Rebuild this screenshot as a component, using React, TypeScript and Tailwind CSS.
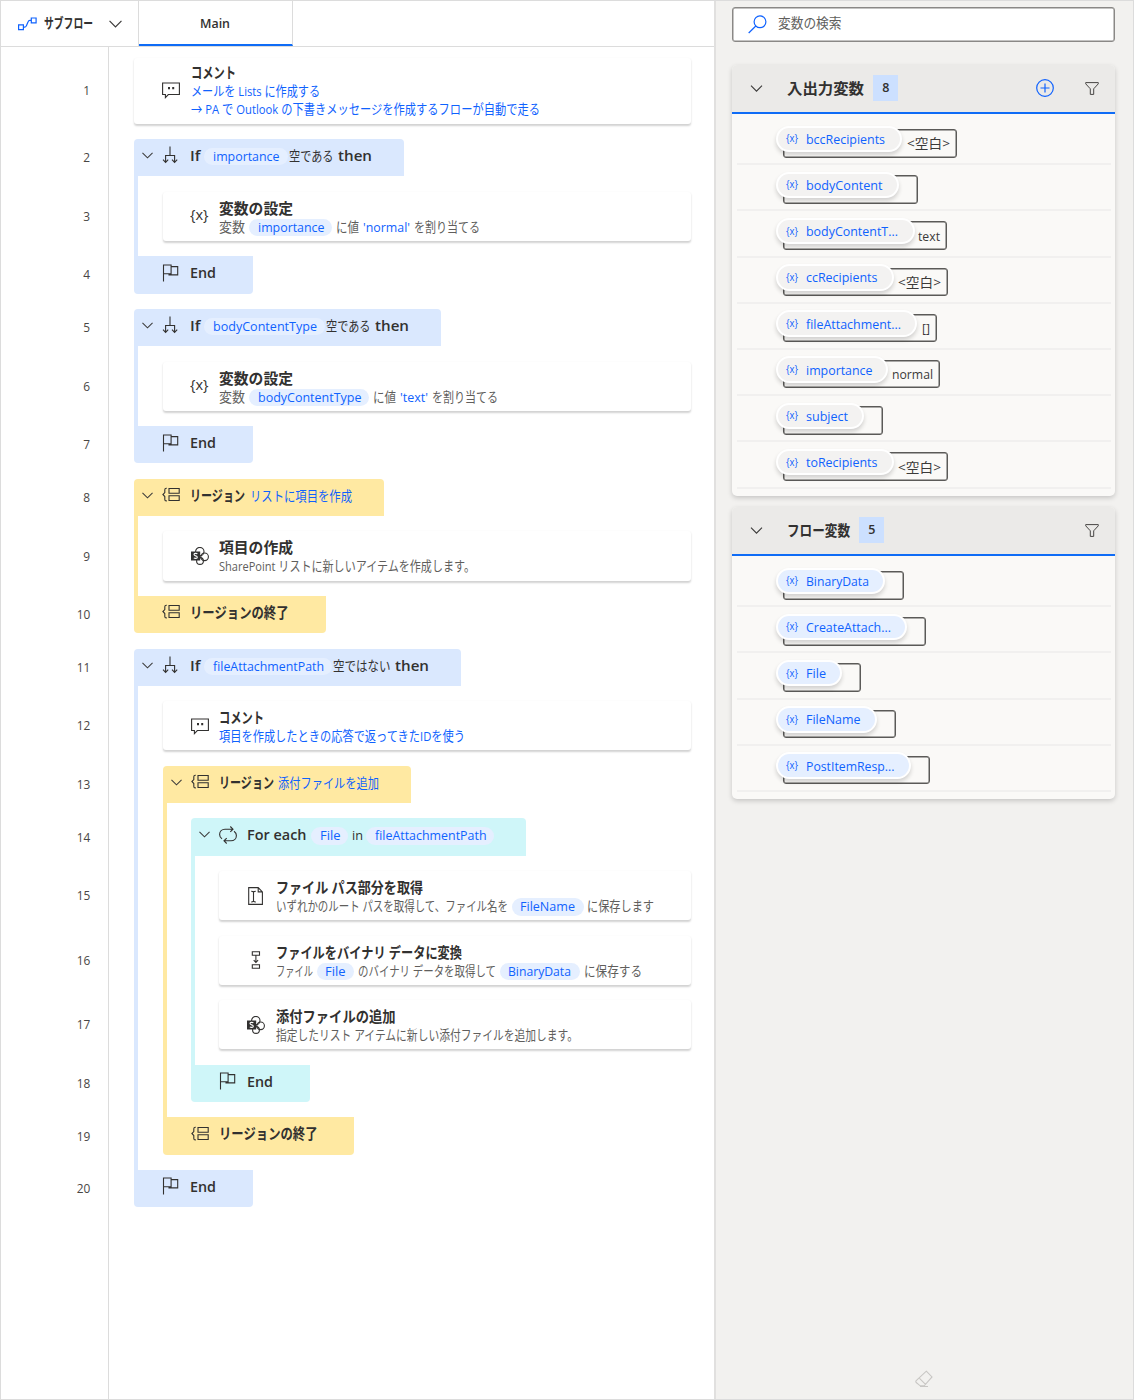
import { useLayoutEffect, useRef, useState } from 'react';
import type { ReactNode } from 'react';
import { clsx } from 'clsx';

type Tone = 'blue' | 'yellow' | 'cyan';

const toneBg: Record<Tone, string> = {
  blue: 'bg-[#dae8fe]',
  yellow: 'bg-[#ffe9a2]',
  cyan: 'bg-[#cff6f9]',
};

const toneBorder: Record<Tone, string> = {
  blue: 'border-[#dae8fe]',
  yellow: 'border-[#ffe9a2]',
  cyan: 'border-[#cff6f9]',
};

interface FitProps {
  w: number;
  children: string;
  className?: string;
}

// One run of text, condensed or widened so that it takes exactly w pixels
function Fit({ w, children, className }: FitProps) {
  const ref = useRef<HTMLSpanElement>(null);
  const [scale, setScale] = useState(1);

  useLayoutEffect(() => {
    if (ref.current) {
      setScale(w / ref.current.getBoundingClientRect().width);
    }
  }, [w, children]);

  return (
    <span className={clsx('inline-block shrink-0 whitespace-nowrap', className)} style={{ width: w }}>
      <span ref={ref} className="inline-block origin-left" style={{ transform: `scaleX(${scale})` }}>
        {children}
      </span>
    </span>
  );
}

function Pill({ w, children, className }: FitProps) {
  return (
    <span
      className={clsx(
        'inline-block shrink-0 rounded-full bg-[#e5efff] px-[8.3px] text-[13.3px] leading-[17.5px] text-[#0f62fe]',
        className
      )}
    >
      <Fit w={w}>{children}</Fit>
    </span>
  );
}

function Chevron({ className }: { className?: string }) {
  return (
    <svg className={className} viewBox="0 0 12 7" fill="none" stroke="#3b3a39" strokeWidth="1.1">
      <path d="M.5.6 6 6.1 11.5.6" />
    </svg>
  );
}

function Icon({ children }: { children: ReactNode }) {
  return (
    <svg className="h-[18px] w-[18px] shrink-0" viewBox="0 0 18 18" fill="none" stroke="#323130" strokeWidth="1.1">
      {children}
    </svg>
  );
}

const CommentIcon = () => (
  <Icon>
    <path d="M.6 2h16.8v11.5H6.3L3.4 16.6v-3.1H.6z" />
    <path d="M6 6h2v2.2H6zM10.2 6h2v2.2h-2z" fill="#323130" stroke="none" />
  </Icon>
);

const BranchIcon = () => (
  <Icon>
    <path d="M8 .5v9M3.6 16.5v-7h9v7M1 13.7l2.6 2.7 2.6-2.7M10 13.7l2.6 2.7 2.6-2.7" />
  </Icon>
);

const FlagIcon = () => (
  <Icon>
    <path d="M1.5 17.5V1h7.6v8.8H1.5M9.1 2.6h6.6v8.3H7V9.8" />
  </Icon>
);

const RegionIcon = () => (
  <Icon>
    <path d="M4.8 2.3H4.3c-1 0-1.5.5-1.5 1.4v2.9L.9 8.5l1.9 2v3c0 .9.5 1.4 1.5 1.4h.5M7 2.5h10.2v4.8H7zM7 9.7h10.2v4.8H7z" />
  </Icon>
);

const LoopIcon = () => (
  <Icon>
    <path d="M3 12.8C1.3 11.6.6 10 .6 8.5.6 5.400 3 3.200 6 3.200h8M11.300.5 14 3.200l-2.700 2.700M15 5.200c1.700 1.200 2.400 2.800 2.400 4.300 0 3.100-2.400 5.300-5.400 5.300H5M7.700 12.100 5 14.800l2.700 2.700" />
  </Icon>
);

const VariableIcon = () => (
  <span className="-ml-px pb-[2px] text-[14.5px] leading-[18px] text-[#323130]">
    <Fit w={18.5}>{'{x}'}</Fit>
  </span>
);

const SharePointIcon = () => (
  <Icon>
    <circle cx="8.8" cy="4.6" r="4.2" />
    <circle cx="13.6" cy="9.8" r="3.8" />
    <circle cx="9" cy="14" r="3.4" />
    <path d="M0 4.5h9.2v9H0z" fill="#323130" stroke="none" />
    <path d="M6.4 6.8C5.5 6.2 3 6.1 3 7.6c0 1.7 3.3.9 3.3 2.6 0 1.5-2.5 1.4-3.500.7" stroke="#fff" />
  </Icon>
);

const PathIcon = () => (
  <Icon>
    <path d="M1.7.6h9.5l4.2 4.3v12.5H1.7zM11.2.6v4.3h4.2M4.2 4.2c1.5 0 2 .4 2.3.9.3-.5.8-.9 2.3-.9M6.5 5.1v9M4.2 15c1.5 0 2-.4 2.3-.9.3.5.8.9 2.3.9" />
  </Icon>
);

const BinaryIcon = () => (
  <Icon>
    <path d="M5.3.8h7.2v3.4H5.3zM5.3 13.8h7.2v3.4H5.3zM8.9 4.2v7M6.7 9.2l2.2 2.2 2.2-2.2" />
  </Icon>
);

interface BarProps {
  tone: Tone;
  icon: ReactNode;
  children: ReactNode;
  className: string;
  open?: boolean;
}

// Coloured bar that opens or closes a block
function Bar({ tone, icon, children, className, open }: BarProps) {
  return (
    <div
      className={clsx(
        'grid h-[37.4px] grid-cols-[28.2px_28px_auto] items-start pt-[6px]',
        open ? 'rounded-t-[4px]' : 'rounded-b-[4px]',
        toneBg[tone],
        className
      )}
    >
      <span className="mt-[1.5px] flex h-[18px] items-center pl-2">
        {open && <Chevron className="h-[7px] w-[11px]" />}
      </span>
      <span className="mt-[1.5px]">{icon}</span>
      <div className="flex items-baseline text-[13.3px] leading-[20px] text-[#323130]">{children}</div>
    </div>
  );
}

function Title({ w, children, className }: FitProps) {
  return (
    <Fit w={w} className={clsx('text-[15px] leading-[20px] font-semibold text-[#323130]', className)}>
      {children}
    </Fit>
  );
}

interface CardProps {
  icon: ReactNode;
  title: string;
  titleWidth: number;
  children: ReactNode;
  className?: string;
}

function Card({ icon, title, titleWidth, children, className = 'h-[49.2px] pt-[6px]' }: CardProps) {
  return (
    <div
      className={clsx(
        'grid grid-cols-[28px_28.6px_auto] rounded-[3px] bg-white shadow-[0_1.5px_2px_rgba(0,0,0,0.18)]',
        className
      )}
    >
      <span />
      <span className="flex items-center pb-[6px]">{icon}</span>
      <div className="flex flex-col">
        <Title w={titleWidth}>{title}</Title>
        <div className="flex items-baseline text-[13.3px] leading-[18px] text-[#605e5c]">{children}</div>
      </div>
    </div>
  );
}

interface BlockProps {
  tone: Tone;
  head: ReactNode;
  foot: ReactNode;
  children: ReactNode;
}

function Block({ tone, head, foot, children }: BlockProps) {
  return (
    <div className="flex flex-col">
      {head}
      <div className={clsx('flex flex-col gap-[15.3px] border-l-4 py-[15.3px] pl-[24.4px]', toneBorder[tone])}>
        {children}
      </div>
      {foot}
    </div>
  );
}

const bar = 'h-[37.4px]';
const card = 'h-[49.2px]';
const lineHeights = [
  'h-[66.2px]', bar, card, bar, bar, card, bar, bar, card, bar,
  bar, card, bar, bar, card, card, card, bar, bar, bar,
];

function LineNumbers() {
  return (
    <div className="flex w-[108px] shrink-0 flex-col gap-[15.3px] border-r border-[#dcdcdc] pt-[10.5px]">
      {lineHeights.map((height, index) => (
        <div
          key={index}
          className={clsx('flex items-center justify-end pt-[2px] pr-[17.5px] text-[12.5px] text-[#484644]', height)}
        >
          <span className="origin-right scale-x-95">{index + 1}</span>
        </div>
      ))}
    </div>
  );
}

function EndBar({ tone }: { tone: Tone }) {
  return (
    <Bar tone={tone} icon={<FlagIcon />} className="w-[119.2px]">
      <Title w={26}>End</Title>
    </Bar>
  );
}

function RegionEnd() {
  return (
    <Bar tone="yellow" icon={<RegionIcon />} className="w-[191.6px]">
      <Title w={98.5}>リージョンの終了</Title>
    </Bar>
  );
}

function FlowSteps() {
  return (
    <div className="flex flex-1 flex-col gap-[15.3px] pt-[10.5px] pr-[23px] pl-[25.3px]">
      <Card icon={<CommentIcon />} title="コメント" titleWidth={45} className="h-[66.2px] pt-[4.5px]">
        <div className="flex flex-col text-[#0f62fe]">
          <Fit w={129}>メールを Lists に作成する</Fit>
          <Fit w={349}>→ PA で Outlook の下書きメッセージを作成するフローが自動で走る</Fit>
        </div>
      </Card>

      <Block
        tone="blue"
        head={
          <Bar tone="blue" icon={<BranchIcon />} className="w-[269.5px]" open>
            <Title w={10.5}>If</Title>
            <Pill w={66.5} className="ml-[3.5px]">importance</Pill>
            <Fit w={44.5} className="ml-[1px]">空である</Fit>
            <Title w={34} className="ml-[4.5px]">then</Title>
          </Bar>
        }
        foot={<EndBar tone="blue" />}
      >
        <Card icon={<VariableIcon />} title="変数の設定" titleWidth={74}>
          <Fit w={26}>変数</Fit>
          <Pill w={66.5} className="ml-[4px]">importance</Pill>
          <Fit w={23} className="ml-[4px]">に値</Fit>
          <Fit w={47} className="ml-[4px] text-[#0f62fe]">'normal'</Fit>
          <Fit w={66} className="ml-[3.5px]">を割り当てる</Fit>
        </Card>
      </Block>

      <Block
        tone="blue"
        head={
          <Bar tone="blue" icon={<BranchIcon />} className="w-[306.5px]" open>
            <Title w={10.5}>If</Title>
            <Pill w={104} className="ml-[3.5px]">bodyContentType</Pill>
            <Fit w={44.5} className="ml-[1px]">空である</Fit>
            <Title w={34} className="ml-[4px]">then</Title>
          </Bar>
        }
        foot={<EndBar tone="blue" />}
      >
        <Card icon={<VariableIcon />} title="変数の設定" titleWidth={74}>
          <Fit w={26}>変数</Fit>
          <Pill w={103.5} className="ml-[4px]">bodyContentType</Pill>
          <Fit w={23} className="ml-[4px]">に値</Fit>
          <Fit w={28} className="ml-[4px] text-[#0f62fe]">'text'</Fit>
          <Fit w={66} className="ml-[3.5px]">を割り当てる</Fit>
        </Card>
      </Block>

      <Block
        tone="yellow"
        head={
          <Bar tone="yellow" icon={<RegionIcon />} className="w-[249.5px]" open>
            <Title w={55}>リージョン</Title>
            <Fit w={102} className="ml-[4.5px] text-[#0f62fe]">リストに項目を作成</Fit>
          </Bar>
        }
        foot={<RegionEnd />}
      >
        <Card icon={<SharePointIcon />} title="項目の作成" titleWidth={74}>
          <Fit w={256}>SharePoint リストに新しいアイテムを作成します。</Fit>
        </Card>
      </Block>

      <Block
        tone="blue"
        head={
          <Bar tone="blue" icon={<BranchIcon />} className="w-[326.5px]" open>
            <Title w={10.5}>If</Title>
            <Pill w={111} className="ml-[3.5px]">fileAttachmentPath</Pill>
            <Fit w={57.5} className="ml-[1px]">空ではない</Fit>
            <Title w={34} className="ml-[4px]">then</Title>
          </Bar>
        }
        foot={<EndBar tone="blue" />}
      >
        <Card icon={<CommentIcon />} title="コメント" titleWidth={45}>
          <Fit w={246} className="text-[#0f62fe]">項目を作成したときの応答で返ってきたIDを使う</Fit>
        </Card>

        <Block
          tone="yellow"
          head={
            <Bar tone="yellow" icon={<RegionIcon />} className="w-[248px]" open>
              <Title w={55}>リージョン</Title>
              <Fit w={101} className="ml-[4.5px] text-[#0f62fe]">添付ファイルを追加</Fit>
            </Bar>
          }
          foot={<RegionEnd />}
        >
          <Block
            tone="cyan"
            head={
              <Bar tone="cyan" icon={<LoopIcon />} className="w-[335.3px]" open>
                <Title w={59.5}>For each</Title>
                <Pill w={20.5} className="ml-[4.5px]">File</Pill>
                <Fit w={11} className="ml-[3.5px]">in</Fit>
                <Pill w={111.5} className="ml-[3.5px]">fileAttachmentPath</Pill>
              </Bar>
            }
            foot={<EndBar tone="cyan" />}
          >
            <Card icon={<PathIcon />} title="ファイル パス部分を取得" titleWidth={147}>
              <Fit w={232}>いずれかのルート パスを取得して、ファイル名を</Fit>
              <Pill w={55} className="ml-[4px]">FileName</Pill>
              <Fit w={67} className="ml-[3.5px]">に保存します</Fit>
            </Card>
            <Card icon={<BinaryIcon />} title="ファイルをバイナリ データに変換" titleWidth={186}>
              <Fit w={37}>ファイル</Fit>
              <Pill w={20.5} className="ml-[4px]">File</Pill>
              <Fit w={138} className="ml-[4px]">のバイナリ データを取得して</Fit>
              <Pill w={63} className="ml-[4px]">BinaryData</Pill>
              <Fit w={58} className="ml-[4px]">に保存する</Fit>
            </Card>
            <Card icon={<SharePointIcon />} title="添付ファイルの追加" titleWidth={119.5}>
              <Fit w={302}>指定したリスト アイテムに新しい添付ファイルを追加します。</Fit>
            </Card>
          </Block>
        </Block>
      </Block>
    </div>
  );
}

interface Variable {
  name: string;
  nameWidth: number;
  chip: number;
  box: number;
  value?: string;
  valueWidth?: number;
}

const ioVariables: Variable[] = [
  { name: 'bccRecipients', nameWidth: 79, chip: 126, box: 174, value: '<空白>', valueWidth: 43 },
  { name: 'bodyContent', nameWidth: 76.5, chip: 123, box: 135 },
  { name: 'bodyContentT...', nameWidth: 92, chip: 139, box: 164, value: 'text', valueWidth: 22 },
  { name: 'ccRecipients', nameWidth: 71.5, chip: 118, box: 165.5, value: '<空白>', valueWidth: 43 },
  { name: 'fileAttachment...', nameWidth: 95, chip: 141.5, box: 154, value: '[]', valueWidth: 8 },
  { name: 'importance', nameWidth: 66.5, chip: 112.5, box: 157, value: 'normal', valueWidth: 41 },
  { name: 'subject', nameWidth: 42, chip: 88, box: 100.5 },
  { name: 'toRecipients', nameWidth: 71.5, chip: 118, box: 165.5, value: '<空白>', valueWidth: 43 },
];

const flowVariables: Variable[] = [
  { name: 'BinaryData', nameWidth: 63, chip: 109.5, box: 121.5 },
  { name: 'CreateAttach...', nameWidth: 85, chip: 131.5, box: 143.5 },
  { name: 'File', nameWidth: 20, chip: 66, box: 78.5 },
  { name: 'FileName', nameWidth: 54.5, chip: 100.7, box: 113 },
  { name: 'PostItemResp...', nameWidth: 88.5, chip: 135, box: 147 },
];

function VariableRow({ variable, chipColor }: { variable: Variable; chipColor: string }) {
  const { name, nameWidth, chip, box, value, valueWidth = 0 } = variable;
  return (
    <div className="h-[46.2px] border-b-2 border-[#f1f0ef] pt-[10px] pl-[46px]">
      <div
        className="relative flex h-[28.5px] items-center justify-end rounded-[3px] border border-[#5b5a58] pr-[6px] shadow-[inset_0_0_0_0.5px_#5b5a58]"
        style={{ width: box }}
      >
        {value && (
          <Fit w={valueWidth} className="text-[12.8px] leading-[18px] text-[#3b3a39]">{value}</Fit>
        )}
        <div
          className={clsx(
            'absolute -top-[4.5px] -left-[8px] flex h-[26.5px] items-center rounded-full border-2 border-white pl-[8px] text-[#0f62fe] shadow-[0_3px_4px_rgba(0,0,0,0.16)]',
            chipColor
          )}
          style={{ width: chip }}
        >
          <Fit w={12} className="text-[10px]">{'{x}'}</Fit>
          <Fit w={nameWidth} className="ml-[8px] text-[13.3px] leading-[20px]">{name}</Fit>
        </div>
      </div>
    </div>
  );
}

interface VariablePanelProps {
  title: string;
  titleWidth: number;
  variables: Variable[];
  chipColor: string;
  canAdd?: boolean;
}

function VariablePanel({ title, titleWidth, variables, chipColor, canAdd }: VariablePanelProps) {
  return (
    <section className="rounded-[5px] bg-[#faf9f7] pb-[7px] shadow-[0_2px_5px_rgba(0,0,0,0.18)]">
      <header className="flex h-[49.5px] items-center rounded-t-[5px] border-b-2 border-[#0f6cf6] bg-[#ebeae8] pl-[17.5px]">
        <Chevron className="h-[7px] w-[13px]" />
        <Fit w={titleWidth} className="ml-[24.5px] text-[15.2px] leading-[20px] font-semibold text-[#323130]">
          {title}
        </Fit>
        <span className="ml-[9px] flex h-[26px] w-[25px] items-center justify-center bg-[#cce0ff] text-[12.5px] font-semibold text-[#323130]">
          {variables.length}
        </span>
        <span className="ml-auto flex items-center gap-[31px] pr-[16px]">
          {canAdd && (
            <svg className="h-[18px] w-[18px]" viewBox="0 0 18 18" fill="none" stroke="#0f62fe" strokeWidth="1.2">
              <circle cx="9" cy="9" r="8.3" />
              <path d="M9 4.5v9M4.5 9h9" />
            </svg>
          )}
          <svg className="h-[13px] w-[14px]" viewBox="0 0 14 13" fill="none" stroke="#484644" strokeWidth="1">
            <path d="M.7.6h12.6v1.2L8.7 6.8v5.6H5.3V6.8L.7 1.8z" />
          </svg>
        </span>
      </header>
      <div className="px-[4.5px] pt-[5px]">
        {variables.map((variable) => (
          <VariableRow key={variable.name} variable={variable} chipColor={chipColor} />
        ))}
      </div>
    </section>
  );
}

function Toolbar() {
  return (
    <div className="flex h-[46px] shrink-0 border-b border-[#dcdcdc]">
      <div className="flex w-[138px] items-center border-r border-[#dcdcdc] pl-[17px]">
        <svg className="h-[14px] w-[19px]" viewBox="0 0 19 14" fill="none" stroke="#0f62fe" strokeWidth="1.2">
          <path d="M.6 7.8h4.8v4.8H.6zM13.3 1h4.8v4.8h-4.8zM5.4 10.2h1.2c1 0 1.3-.3 1.7-1.3l1.8-4.2c.4-1 .8-1.3 1.7-1.3h1.5" />
        </svg>
        <Fit w={49} className="ml-[7px] text-[13.3px] font-semibold text-[#323130]">サブフロー</Fit>
        <Chevron className="ml-[15.5px] h-[8px] w-[13px]" />
      </div>
      <div className="flex w-[153.5px] items-center justify-center border-r border-b-2 border-r-[#dcdcdc] border-b-[#0f6cf6] pt-[3px]">
        <Fit w={30} className="text-[13.3px] font-semibold text-[#323130]">Main</Fit>
      </div>
    </div>
  );
}

export default function App() {
  return (
    <div className="flex h-[1400px] w-[1134px] overflow-hidden border border-[#dcdcdc] bg-white font-['Open_Sans','Noto_Sans_CJK_JP',sans-serif]">
      <main className="flex w-[713px] flex-col">
        <Toolbar />
        <div className="flex flex-1">
          <LineNumbers />
          <FlowSteps />
        </div>
      </main>

      <aside className="flex flex-1 flex-col border-l-2 border-[#e1e0df] bg-[#f2f1ef] pt-[5.5px] pr-[18px] pl-[16.4px]">
        <div className="flex h-[35px] items-center rounded-[3px] border border-[#8a8886] bg-white pl-[15px] shadow-[inset_0_0_0_0.5px_#8a8886]">
          <svg className="h-[19px] w-[19px]" viewBox="0 0 19 19" fill="none" stroke="#0f62fe" strokeWidth="1.2">
            <circle cx="12" cy="6.8" r="5.9" />
            <path d="M7.8 11 .7 18" />
          </svg>
          <Fit w={63.5} className="ml-[10.5px] text-[13.3px] text-[#605e5c]">変数の検索</Fit>
        </div>
        <div className="mt-[23px] flex flex-col gap-[11px]">
          <VariablePanel
            title="入出力変数"
            titleWidth={77}
            variables={ioVariables}
            chipColor="bg-[#f3f2f1]"
            canAdd
          />
          <VariablePanel
            title="フロー変数"
            titleWidth={63}
            variables={flowVariables}
            chipColor="bg-[#e5efff]"
          />
        </div>
        <svg
          className="mt-auto mb-[11px] ml-[182.6px] h-[18px] w-[18px]"
          viewBox="0 0 18 18"
          fill="none"
          stroke="#c8c6c4"
          strokeWidth="1.1"
        >
          <path d="M11.3 1.2 17 6.9 9.2 15.8H5.2L1.2 12.5c-.5-.6-.5-1.3 0-1.9zM4.5 8.3l6 6M5 16.5h8" />
        </svg>
      </aside>
    </div>
  );
}
